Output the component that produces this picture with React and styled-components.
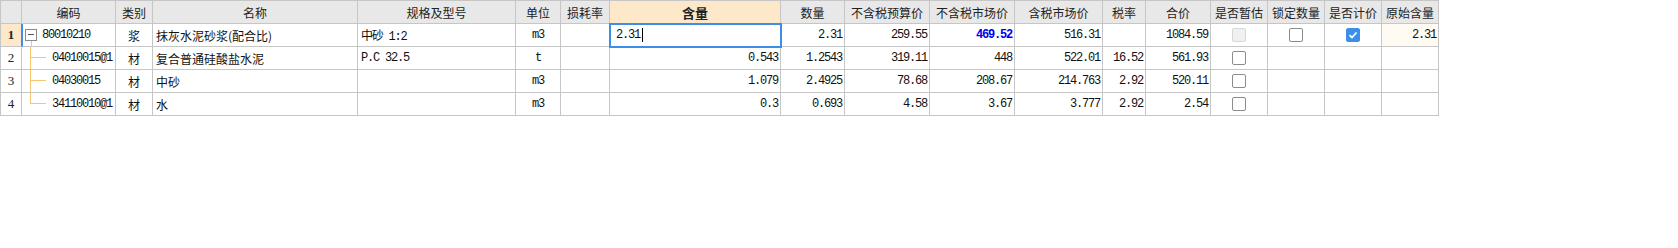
import React from 'react';
import styled, { createGlobalStyle, css } from 'styled-components';

const GlobalStyle = createGlobalStyle`
  body {
    margin: 0;
    background: #fff;
    font-family: "Noto Sans CJK SC", sans-serif;
  }
`;

// column widths include the right grid line
const COLS = [21, 94, 37, 205, 158, 45, 49, 171, 64, 85, 85, 88, 43, 65, 57, 57, 57, 57];
const LINE = '#c6c6c6';
const BLUE = '#3d8ee8';
const CJK = '"Noto Sans CJK SC", sans-serif';
const MONO = '"Liberation Mono", "Noto Sans CJK SC", monospace';

const Sheet = styled.div`
  display: grid;
  grid-template-columns: ${COLS.map((w) => w + 'px').join(' ')};
  grid-auto-rows: 23px;
  width: max-content;
  border-left: 1px solid ${LINE};
  border-top: 1px solid ${LINE};
  font-size: 12px;
  color: #111;
`;

const HeadCell = styled.div`
  box-sizing: border-box;
  display: flex;
  align-items: center;
  justify-content: center;
  border-right: 1px solid ${LINE};
  border-bottom: 1px solid ${LINE};
  background: ${(p) => (p.$active ? '#fde8c9' : '#e8e8e8')};
  font-family: ${CJK};
  font-size: ${(p) => (p.$active ? '13px' : '12px')};
  font-weight: ${(p) => (p.$active ? 700 : 400)};
  color: #222;
  white-space: nowrap;
  overflow: hidden;
`;

const Cell = styled.div`
  box-sizing: border-box;
  position: relative;
  display: flex;
  align-items: center;
  justify-content: ${(p) => (p.$align === 'right' ? 'flex-end' : p.$align === 'center' ? 'center' : 'flex-start')};
  padding: 0 ${(p) => (p.$align === 'right' ? '2px' : '3px')} 0 3px;
  border-right: 1px solid ${LINE};
  border-bottom: 1px solid ${LINE};
  background: ${(p) => p.$bg || '#fff'};
  white-space: nowrap;
  overflow: hidden;
  font-family: ${(p) => (p.$mono ? MONO : CJK)};
  letter-spacing: ${(p) => (p.$mono ? '-1.2px' : '0')};
  ${(p) =>
    p.$strong &&
    css`
      color: #0000ee;
      font-weight: 700;
    `}
`;

const RowNum = styled.div`
  box-sizing: border-box;
  display: flex;
  align-items: center;
  justify-content: center;
  border-right: ${(p) => (p.$current ? `2px solid ${BLUE}` : `1px solid ${LINE}`)};
  margin-right: ${(p) => (p.$current ? '-1px' : '0')};
  border-bottom: 1px solid ${LINE};
  background: ${(p) => (p.$current ? '#fde8c9' : '#fff')};
  font-family: "Liberation Serif", serif;
  font-size: 13px;
  font-weight: ${(p) => (p.$current ? 700 : 400)};
  color: #222;
  position: relative;
  z-index: 1;
`;

const CodeCell = styled.div`
  box-sizing: border-box;
  display: flex;
  align-items: center;
  border-right: 1px solid ${LINE};
  border-bottom: 1px solid ${LINE};
  font-family: ${MONO};
  letter-spacing: -1.2px;
  white-space: nowrap;
  overflow: hidden;
  box-shadow: ${(p) => (p.$current ? `inset 1px 0 0 ${BLUE}` : 'none')};
`;

const Toggle = styled.span`
  position: relative;
  box-sizing: border-box;
  flex: none;
  width: 12px;
  height: 12px;
  margin: 0 5px 0 3px;
  border: 1px solid #8a8a8a;
  background: #fff;
  &::before {
    content: '';
    position: absolute;
    left: 2px;
    right: 2px;
    top: 4px;
    height: 1px;
    background: #555;
  }
  &::after {
    content: '';
    position: absolute;
    left: 5px;
    top: 11px;
    width: 1px;
    height: 6px;
    background: #f7c56f;
  }
`;

const Branch = styled.span`
  position: relative;
  flex: none;
  align-self: stretch;
  width: 22px;
  margin-left: 8px;
  &::before {
    content: '';
    position: absolute;
    left: 0;
    top: 0;
    width: 1px;
    height: ${(p) => (p.$last ? '11px' : '100%')};
    background: #f7c56f;
  }
  &::after {
    content: '';
    position: absolute;
    left: 1px;
    top: 10px;
    width: 15px;
    height: 1px;
    background: #f7c56f;
  }
`;

const EditCell = styled(Cell)`
  outline: 2px solid ${BLUE};
  outline-offset: -1px;
  z-index: 2;
  padding-left: 6px;
`;

const Caret = styled.span`
  width: 1px;
  height: 14px;
  margin-left: 2px;
  background: #000;
`;

const Box = styled.span`
  box-sizing: border-box;
  display: inline-flex;
  align-items: center;
  justify-content: center;
  width: 14px;
  height: 14px;
  border-radius: 2px;
  border: 1px solid ${(p) => (p.$state === 'disabled' ? '#d8d8d8' : p.$state === 'checked' ? BLUE : '#8c8c8c')};
  background: ${(p) => (p.$state === 'disabled' ? '#f0f0f0' : p.$state === 'checked' ? BLUE : '#fff')};
`;

const Check = ({ state }) => (
  <Box $state={state}>
    {state === 'checked' && (
      <svg width="10" height="10" viewBox="0 0 10 10">
        <path d="M1.5 5.2 L4 7.5 L8.5 2.5" fill="none" stroke="#fff" strokeWidth="1.8" />
      </svg>
    )}
  </Box>
);

const heads = ['', '编码', '类别', '名称', '规格及型号', '单位', '损耗率', '含量', '数量', '不含税预算价', '不含税市场价', '含税市场价', '税率', '合价', '是否暂估', '锁定数量', '是否计价', '原始含量'];

const children = [
  { code: '04010015@1', name: '复合普通硅酸盐水泥', spec: 'P.C 32.5', unit: 't', qty: '0.543', amount: '1.2543', budget: '319.11', market: '448', taxed: '522.01', rate: '16.52', total: '561.93' },
  { code: '04030015', name: '中砂', spec: '', unit: 'm3', qty: '1.079', amount: '2.4925', budget: '78.68', market: '208.67', taxed: '214.763', rate: '2.92', total: '520.11' },
  { code: '34110010@1', name: '水', spec: '', unit: 'm3', qty: '0.3', amount: '0.693', budget: '4.58', market: '3.67', taxed: '3.777', rate: '2.92', total: '2.54' },
];

export default function App() {
  return (
    <>
      <GlobalStyle />
      <Sheet>
        {heads.map((h, i) => (
          <HeadCell key={i} $active={h === '含量'}>{h}</HeadCell>
        ))}

        <RowNum $current>1</RowNum>
        <CodeCell $current>
          <Toggle />
          80010210
        </CodeCell>
        <Cell $align="center">浆</Cell>
        <Cell>抹灰水泥砂浆(配合比)</Cell>
        <Cell $mono>中砂 1:2</Cell>
        <Cell $align="center" $mono>m3</Cell>
        <Cell />
        <EditCell $mono>2.31<Caret /></EditCell>
        <Cell $align="right" $mono>2.31</Cell>
        <Cell $align="right" $mono>259.55</Cell>
        <Cell $align="right" $mono $strong>469.52</Cell>
        <Cell $align="right" $mono>516.31</Cell>
        <Cell />
        <Cell $align="right" $mono>1084.59</Cell>
        <Cell $align="center"><Check state="disabled" /></Cell>
        <Cell $align="center"><Check /></Cell>
        <Cell $align="center"><Check state="checked" /></Cell>
        <Cell $align="right" $mono $bg="#fffaf2">2.31</Cell>

        {children.map((r, i) => (
          <React.Fragment key={r.code}>
            <RowNum>{i + 2}</RowNum>
            <CodeCell>
              <Branch $last={i === children.length - 1} />
              {r.code}
            </CodeCell>
            <Cell $align="center">材</Cell>
            <Cell>{r.name}</Cell>
            <Cell $mono>{r.spec}</Cell>
            <Cell $align="center" $mono>{r.unit}</Cell>
            <Cell />
            <Cell $align="right" $mono>{r.qty}</Cell>
            <Cell $align="right" $mono>{r.amount}</Cell>
            <Cell $align="right" $mono>{r.budget}</Cell>
            <Cell $align="right" $mono>{r.market}</Cell>
            <Cell $align="right" $mono>{r.taxed}</Cell>
            <Cell $align="right" $mono>{r.rate}</Cell>
            <Cell $align="right" $mono>{r.total}</Cell>
            <Cell $align="center"><Check /></Cell>
            <Cell />
            <Cell />
            <Cell />
          </React.Fragment>
        ))}
      </Sheet>
    </>
  );
}
